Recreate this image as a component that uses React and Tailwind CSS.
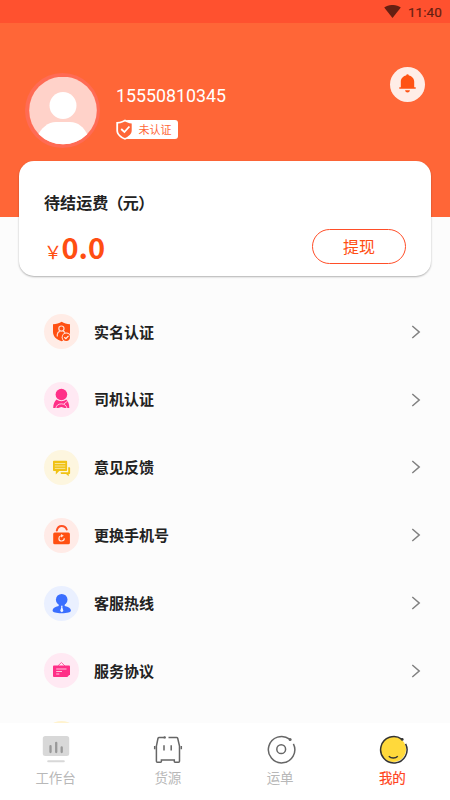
import { useState } from "react"

const RealNameIcon = () => (
    <svg width="35" height="35" viewBox="0 0 35 35" fill="none">
        <path d="M17.7 7.8C20 9.5 22.8 10.2 26 10.2V18C26 22.5 22.5 25.5 17.7 27.2C12.5 25.5 9 22.5 9 18V10.2C12.3 10.2 15.2 9.5 17.7 7.8Z" fill="#ff5012" />
        <circle cx="17.4" cy="14.6" r="2.6" stroke="#ffd9cc" strokeWidth="1.2" />
        <path d="M13.3 22.4V20.6C13.3 18.9 14.5 17.7 15.8 17.1M19 17.1C19.9 17.5 20.6 18 21 18.7" stroke="#ffd9cc" strokeWidth="1.2" />
        <circle cx="22.3" cy="23.2" r="4.6" fill="#fff1ec" />
        <circle cx="22.3" cy="23.2" r="3.7" fill="#ff5012" />
        <path d="M20.3 23.2L21.9 24.7L24.5 21.8" stroke="#fff1ec" strokeWidth="1.2" />
    </svg>
)

const DriverIcon = () => (
    <svg width="35" height="35" viewBox="0 0 35 35" fill="none">
        <circle cx="17.4" cy="12.5" r="5.8" fill="#ff2f87" />
        <path d="M12.6 17.6C14.2 18.8 15.7 19.3 17.4 19.3C19.1 19.3 20.7 18.8 22.2 17.6C24.3 19.2 25.3 22.4 25.3 26H9.2C9.2 22.4 10.5 19.2 12.6 17.6Z" fill="#ff2f87" />
        <path d="M11.9 26C12.4 23.2 14.4 21.9 17.4 21.9C20.2 21.9 22.3 23.2 22.9 26" stroke="#ffe9f3" strokeWidth="0.8" />
        <path d="M14.2 26.1L17.4 24.9L20.6 26.1Z" fill="#ffe9f3" />
        <path d="M19.8 22L23.6 19" stroke="#ffe9f3" strokeWidth="0.8" />
    </svg>
)

const FeedbackIcon = () => (
    <svg width="35" height="35" viewBox="0 0 35 35" fill="none">
        <path d="M9.8 10.8H22.3Q23.1 10.8 23.1 11.6V20.2Q23.1 21 22.3 21H15.2L11.8 24.4V21H9.8Q9 21 9 20.2V11.6Q9 10.8 9.8 10.8Z" fill="#f0c214" />
        <path d="M10.8 13.5H21.3M10.8 16H21.3M10.8 18.4H21.3" stroke="#fbeeb0" strokeWidth="0.8" />
        <path d="M24.2 17.3H25.4Q26.1 17.3 26.1 18V23.2Q26.1 23.9 25.4 23.9H24.7V26.2L22 23.9H17.3Q16.6 23.9 16.6 22.2H24.2Z" fill="#f0c214" />
    </svg>
)

const PhoneLockIcon = () => (
    <svg width="35" height="35" viewBox="0 0 35 35" fill="none">
        <path d="M12.8 12.5C13.5 9.4 15.2 8 17.7 8C20 8 21.8 9.2 22.7 11.5" stroke="#ff5022" strokeWidth="2" strokeLinecap="round" />
        <rect x="9.2" y="14.4" width="16.7" height="11.8" rx="1.5" fill="#ff5012" />
        <path d="M16.8 17.8C15.5 18.2 14.9 19.2 14.9 20.4C14.9 21.9 16 23 17.6 23C19.1 23 20.3 21.9 20.3 20.3" stroke="#ffe4da" strokeWidth="1.2" />
        <path d="M17 16.1L19.8 17.8L17 19.4Z" fill="#ffe4da" />
    </svg>
)

const ServiceIcon = () => (
    <svg width="35" height="35" viewBox="0 0 35 35" fill="none">
        <circle cx="17.7" cy="13.7" r="5.8" fill="#3a6eff" />
        <path d="M14.7 17H20.7V20C24.6 20.6 26.9 22.3 26.9 24.6C26.9 26.5 23.2 27.3 17.7 27.3C12.3 27.3 8.6 26.5 8.6 24.6C8.6 22.3 10.8 20.6 14.7 20Z" fill="#3a6eff" />
        <path d="M17 19.7H18.6L18.3 21.3L19.4 25L17.8 26.2L16.2 25L17.3 21.3Z" fill="#f3f6ff" />
    </svg>
)

const AgreementIcon = () => (
    <svg width="35" height="35" viewBox="0 0 35 35" fill="none">
        <path d="M13.8 13L17.4 9.5L21 13" stroke="#ff5da3" strokeWidth="1" />
        <path d="M9.9 12.5H25.1Q26 12.5 26 13.4V21.2L23.3 24H9.9Q9 24 9 23.1V13.4Q9 12.5 9.9 12.5Z" fill="#ff2f87" />
        <path d="M12.2 16H22.5M12.2 18.5H18M12.2 21H15.3" stroke="#ffc4de" strokeWidth="1" />
    </svg>
)

const menu = [
    { name: "实名认证", bg: "bg-[#ffece6]", icon: <RealNameIcon /> },
    { name: "司机认证", bg: "bg-[#ffe9f3]", icon: <DriverIcon /> },
    { name: "意见反馈", bg: "bg-[#fdf6df]", icon: <FeedbackIcon /> },
    { name: "更换手机号", bg: "bg-[#ffebe7]", icon: <PhoneLockIcon /> },
    { name: "客服热线", bg: "bg-[#eaf0ff]", icon: <ServiceIcon /> },
    { name: "服务协议", bg: "bg-[#ffe9f3]", icon: <AgreementIcon /> },
    { name: "", bg: "bg-[#fff3cf]", icon: null },
]

const WorkbenchIcon = () => (
    <svg width="30" height="30" viewBox="0 0 30 30" fill="none">
        <rect x="1.8" y="2" width="26.4" height="20" rx="2.5" fill="#d8d8d8" />
        <path d="M9.5 12.2V18M15.2 8.8V18M20.7 13.5V18" stroke="#999" strokeWidth="2.3" strokeLinecap="round" />
        <path d="M7.2 27.2H22.8" stroke="#d8d8d8" strokeWidth="2" strokeLinecap="round" />
    </svg>
)

const TruckIcon = () => (
    <svg width="30" height="30" viewBox="0 0 30 30" fill="none" stroke="#666" strokeWidth="1.5">
        <path d="M11.8 3.4H6.2Q5.3 3.4 5 4.3L3.4 12V27.2Q3.4 28.2 4.4 28.2H7.7Q8.4 28.2 8.4 27.5V26H21.3V27.5Q21.3 28.2 22 28.2H25.5Q26.5 28.2 26.5 27.2V12L24.7 4.3Q24.4 3.4 23.5 3.4H15.5" />
        <path d="M11 11.2V16.6M18.2 11.2V16.6" />
        <path d="M1.7 12V15.3M28.3 12V15.3" />
        <circle cx="11.7" cy="3.4" r="1.2" fill="#666" stroke="none" />
    </svg>
)

const WaybillIcon = () => (
    <svg width="30" height="30" viewBox="0 0 30 30" fill="none" stroke="#666" strokeWidth="1.5">
        <path d="M27.4 9.8A13.2 13.2 0 1 1 23.6 5.2" />
        <circle cx="15.2" cy="15.2" r="4.4" />
        <circle cx="24.1" cy="5.5" r="1.5" fill="#666" stroke="none" />
    </svg>
)

const MineIcon = () => (
    <svg width="30" height="30" viewBox="0 0 30 30" fill="none" stroke="#333" strokeWidth="1.5">
        <circle cx="15.2" cy="15.2" r="12.8" fill="#ffd93b" stroke="none" />
        <path d="M27.6 9.8A13.2 13.2 0 1 1 23.6 5.1" />
        <path d="M10.8 22.3C13.2 24.7 17.3 24.7 19.8 22.3" />
        <circle cx="24.2" cy="5.4" r="1.4" fill="#333" stroke="none" />
    </svg>
)

const tabs = [
    { name: "工作台", icon: <WorkbenchIcon /> },
    { name: "货源", icon: <TruckIcon /> },
    { name: "运单", icon: <WaybillIcon /> },
    { name: "我的", icon: <MineIcon /> },
]

function Header() {
    return (
        <header className="h-[217px] shrink-0 bg-[#ff6637]">
            <div className="flex h-[23px] items-center justify-end gap-[7px] bg-[#ff512f] pr-2">
                <svg width="17" height="13" viewBox="0 0 17 13">
                    <path d="M0.2 2.6C5 -0.9 12 -0.9 16.8 2.6L8.5 13Z" fill="#661f12" />
                </svg>
                <span className="pt-[2px] text-[13.5px] leading-none tracking-[0.1px] text-[#661f12] [-webkit-text-stroke:0.2px]">11:40</span>
            </div>
            <div className="flex pt-[50px] pr-[25px] pl-[25px]">
                <div className="size-[75px] rounded-full bg-[#ff6b54] p-[3.5px]">
                    <svg className="size-[68px]" viewBox="0 0 68 68">
                        <clipPath id="face"><circle cx="34" cy="33.5" r="33.8" /></clipPath>
                        <g clipPath="url(#face)">
                            <rect width="68" height="68" fill="#ffd2c9" />
                            <circle cx="34" cy="28.5" r="13.5" fill="#fff" />
                            <path d="M8 68V60C12 51 19 45 27 45H41C49 45 55 50 59 59V68Z" fill="#fff" />
                        </g>
                    </svg>
                </div>
                <div className="ml-4 flex-1 pt-[13px]">
                    <p className="text-[17.8px] leading-5 text-white">15550810345</p>
                    <div className="mt-[13px] flex items-center">
                        <svg className="z-10" width="18" height="21" viewBox="0 0 18 21">
                            <path d="M9 0.4L12 2Q14.5 3 17.4 2.9V11.5C17.4 15.8 13.5 19 9 20.8C4.3 19 0.3 15.8 0.3 11.5V2.9Q3.5 3 6 2Z" fill="#fff" />
                            <path d="M9 2.4L11.5 3.6Q13.5 4.5 15.7 4.5V11.4C15.7 14.8 12.6 17.4 9 18.9C5.2 17.4 2.1 14.8 2.1 11.4V4.5Q4.5 4.5 6.5 3.6Z" fill="#ff6637" />
                            <path d="M5.2 10L8.4 13L13.4 7.5" fill="none" stroke="#fff" strokeWidth="1.8" />
                        </svg>
                        <span className="-ml-[9px] h-[19px] w-[53px] rounded-[3px] bg-white pt-px pl-[13.5px] text-[11px] leading-[19px] whitespace-nowrap text-[#ff6637]">未认证</span>
                    </div>
                </div>
                <button className="-mt-[6.5px] flex size-[35px] items-center justify-center rounded-full bg-[#ffede7]">
                    <svg className="-mt-[2px]" width="17" height="19" viewBox="0 0 17 19" fill="#ff5314">
                        <path d="M8.5 0.3Q9.6 0.3 9.9 1.5C13 2.2 15.2 4.6 15.2 7.6V13.3H16.7V14.7H0.3V13.3H1.8V7.6C1.8 4.6 4 2.2 7.1 1.5Q7.4 0.3 8.5 0.3Z" />
                        <path d="M6 16.3H11Q10.6 18.6 8.5 18.6Q6.4 18.6 6 16.3Z" />
                    </svg>
                </button>
            </div>
        </header>
    )
}

export default function App() {
    const [active, setActive] = useState("我的")

    return (
        <div className="flex h-[800px] w-[450px] flex-col overflow-hidden bg-[#fcfcfc] font-[Roboto,'Noto_Sans_CJK_SC',sans-serif]">
            <Header />

            <section className="z-10 mx-[19px] -mt-[56.5px] h-[115px] shrink-0 rounded-[15px] bg-white pr-[25px] pl-[25px] shadow-[0_1px_2px_rgba(0,0,0,0.3)]">
                <h2 className="pt-[31px] text-[16px] leading-6 font-bold tracking-[0.1px] text-[#222]">
                    待结运费<span className="-ml-px tracking-[-0.6px]">（元）</span>
                </h2>
                <div className="mt-[13px] flex h-[35px] items-center justify-between font-['Noto_Sans_CJK_SC',sans-serif]">
                    <p className="flex h-9 items-baseline leading-9 text-[#ff4e12]">
                        <span className="w-[17.5px] text-[18px]">￥</span>
                        <span className="text-[29px] font-bold">0.0</span>
                    </p>
                    <button className="h-[35px] w-[94px] rounded-full border-[1.3px] border-[#ff4e28] text-[16px] leading-none text-[#ff4e12]">提现</button>
                </div>
            </section>

            <main className="min-h-0 flex-1 overflow-hidden pt-[22.5px]">
                {menu.map((m, i) => (
                    <div key={i} className="flex h-[67.8px] items-center pr-[29px] pl-[44px]">
                        <div className={"size-[35px] rounded-full " + m.bg}>{m.icon}</div>
                        <span className="ml-[15px] flex-1 pt-[2px] text-[15px] font-bold text-[#222]">{m.name}</span>
                        <svg width="10" height="14" viewBox="0 0 10 14" fill="none">
                            <path d="M1.3 1L8.2 7L1.3 13" stroke="#808080" strokeWidth="1.5" />
                        </svg>
                    </div>
                ))}
            </main>

            <nav className="flex h-[77px] shrink-0 bg-white pt-[10.5px] pr-px">
                {tabs.map((t) => (
                    <button
                        key={t.name}
                        className="flex flex-1 flex-col items-center"
                        onClick={() => setActive(t.name)}
                    >
                        {t.icon}
                        <span className={"mt-[4.5px] -ml-px text-[13.5px] leading-5 " + (active === t.name ? "text-[#ff4520] [-webkit-text-stroke:0.2px]" : "text-[#b8b8b8]")}>{t.name}</span>
                    </button>
                ))}
            </nav>
        </div>
    )
}
